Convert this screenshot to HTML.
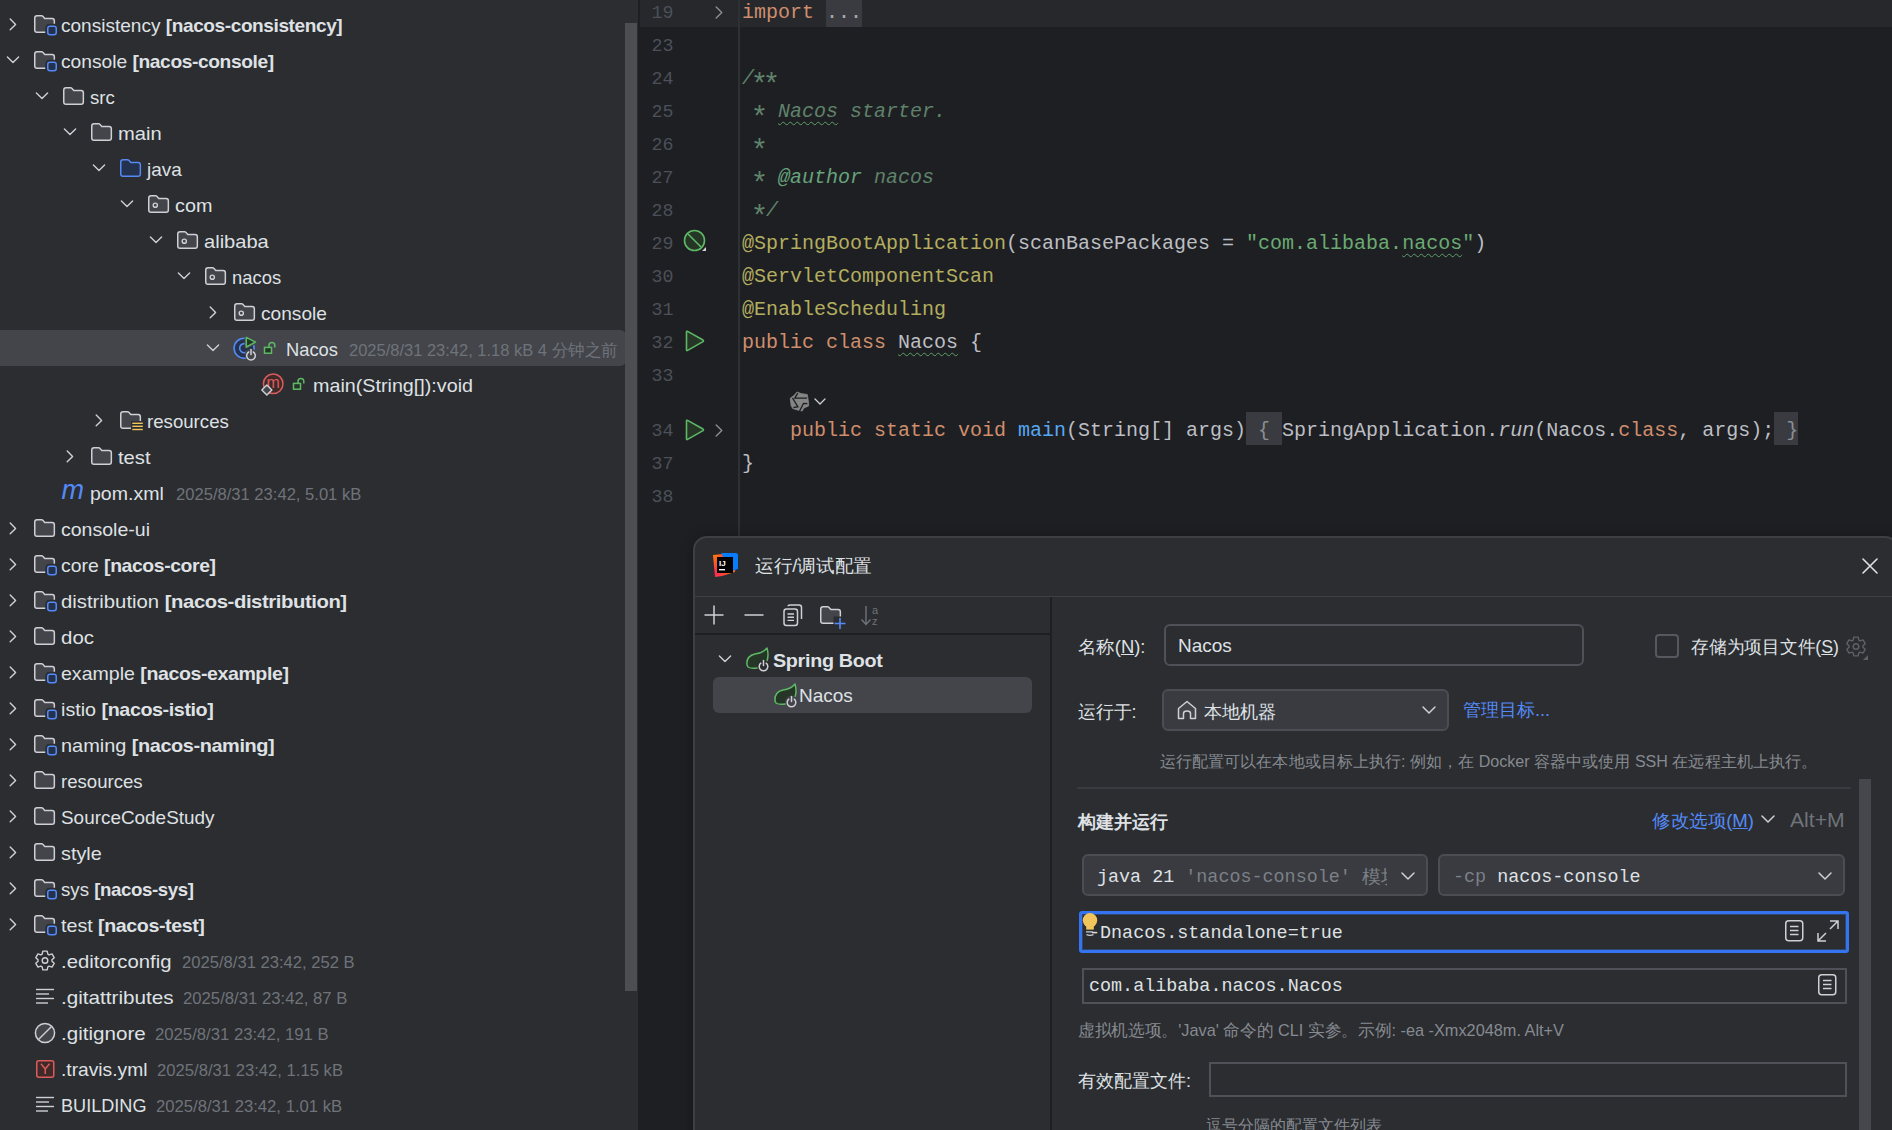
<!DOCTYPE html><html><head><meta charset="utf-8"><style>
html,body{margin:0;padding:0;width:1892px;height:1130px;overflow:hidden;background:#1E1F22;}
.t{position:absolute;white-space:pre;}
.r{position:absolute;}
.i{position:absolute;overflow:visible;}
.ast{display:inline-block;font-style:normal;transform:translate(-0.5px,5.8px) scale(1.45);transform-origin:50% 30%;}
</style></head><body>
<div class="r" style="left:0px;top:0px;width:638px;height:1130px;background:#2B2D30;"></div>
<svg class="i" style="left:8.0px;top:-18px" width="10" height="14" viewBox="0 0 10 14"><polyline points="2.2,1 7.6,6.4 2.2,11.8" fill="none" stroke="#CED0D6" stroke-width="1.4" stroke-linejoin="round" stroke-linecap="round"/></svg>
<svg class="i" style="left:34.0px;top:-21px" width="24" height="22" viewBox="0 0 24 22"><path d="M0.75,3 Q0.75,0.75 3,0.75 H7.6 Q8.3,0.75 8.8,1.25 L10.8,3.4 H18.1 Q20.35,3.4 20.35,5.65 V15 Q20.35,17.25 18.1,17.25 H3 Q0.75,17.25 0.75,15 Z" fill="#43454A" stroke="#CED0D6" stroke-width="1.5" stroke-linejoin="round"/><rect x="13" y="10.5" width="10" height="10" rx="2.6" fill="#2B2D30" stroke="#2B2D30" stroke-width="3.5"/><rect x="13.75" y="11.25" width="8.5" height="8.5" rx="2.2" fill="#25324D" stroke="#548AF7" stroke-width="1.5"/></svg>
<div class="t" id="row0" style="left:61.0px;top:-20.4px;font-size:19px;line-height:19px;color:#DFE1E5;font-family:'Liberation Sans', sans-serif;transform:scaleX(0.7956);transform-origin:0 0;">common <b style="letter-spacing:-0.4px">[nacos-common]</b></div>
<svg class="i" style="left:8.0px;top:18px" width="10" height="14" viewBox="0 0 10 14"><polyline points="2.2,1 7.6,6.4 2.2,11.8" fill="none" stroke="#CED0D6" stroke-width="1.4" stroke-linejoin="round" stroke-linecap="round"/></svg>
<svg class="i" style="left:34.0px;top:15px" width="24" height="22" viewBox="0 0 24 22"><path d="M0.75,3 Q0.75,0.75 3,0.75 H7.6 Q8.3,0.75 8.8,1.25 L10.8,3.4 H18.1 Q20.35,3.4 20.35,5.65 V15 Q20.35,17.25 18.1,17.25 H3 Q0.75,17.25 0.75,15 Z" fill="#43454A" stroke="#CED0D6" stroke-width="1.5" stroke-linejoin="round"/><rect x="13" y="10.5" width="10" height="10" rx="2.6" fill="#2B2D30" stroke="#2B2D30" stroke-width="3.5"/><rect x="13.75" y="11.25" width="8.5" height="8.5" rx="2.2" fill="#25324D" stroke="#548AF7" stroke-width="1.5"/></svg>
<div class="t" id="row1" style="left:61.0px;top:15.6px;font-size:19px;line-height:19px;color:#DFE1E5;font-family:'Liberation Sans', sans-serif;transform:scaleX(1.0022);transform-origin:0 0;">consistency <b style="letter-spacing:-0.4px">[nacos-consistency]</b></div>
<svg class="i" style="left:6.0px;top:55px" width="14" height="10" viewBox="0 0 14 10"><polyline points="1.4,2 7,7.4 12.6,2" fill="none" stroke="#CED0D6" stroke-width="1.4" stroke-linejoin="round" stroke-linecap="round"/></svg>
<svg class="i" style="left:34.0px;top:51px" width="24" height="22" viewBox="0 0 24 22"><path d="M0.75,3 Q0.75,0.75 3,0.75 H7.6 Q8.3,0.75 8.8,1.25 L10.8,3.4 H18.1 Q20.35,3.4 20.35,5.65 V15 Q20.35,17.25 18.1,17.25 H3 Q0.75,17.25 0.75,15 Z" fill="#43454A" stroke="#CED0D6" stroke-width="1.5" stroke-linejoin="round"/><rect x="13" y="10.5" width="10" height="10" rx="2.6" fill="#2B2D30" stroke="#2B2D30" stroke-width="3.5"/><rect x="13.75" y="11.25" width="8.5" height="8.5" rx="2.2" fill="#25324D" stroke="#548AF7" stroke-width="1.5"/></svg>
<div class="t" id="row2" style="left:61.0px;top:51.6px;font-size:19px;line-height:19px;color:#DFE1E5;font-family:'Liberation Sans', sans-serif;transform:scaleX(1.0105);transform-origin:0 0;">console <b style="letter-spacing:-0.4px">[nacos-console]</b></div>
<svg class="i" style="left:34.5px;top:91px" width="14" height="10" viewBox="0 0 14 10"><polyline points="1.4,2 7,7.4 12.6,2" fill="none" stroke="#CED0D6" stroke-width="1.4" stroke-linejoin="round" stroke-linecap="round"/></svg>
<svg class="i" style="left:62.5px;top:87px" width="22" height="18" viewBox="0 0 22 18"><path d="M0.75,3 Q0.75,0.75 3,0.75 H7.6 Q8.3,0.75 8.8,1.25 L10.8,3.4 H18.1 Q20.35,3.4 20.35,5.65 V15 Q20.35,17.25 18.1,17.25 H3 Q0.75,17.25 0.75,15 Z" fill="#43454A" stroke="#CED0D6" stroke-width="1.5" stroke-linejoin="round"/></svg>
<div class="t" id="row3" style="left:89.5px;top:87.6px;font-size:19px;line-height:19px;color:#DFE1E5;font-family:'Liberation Sans', sans-serif;transform:scaleX(0.9791);transform-origin:0 0;">src</div>
<svg class="i" style="left:63.0px;top:127px" width="14" height="10" viewBox="0 0 14 10"><polyline points="1.4,2 7,7.4 12.6,2" fill="none" stroke="#CED0D6" stroke-width="1.4" stroke-linejoin="round" stroke-linecap="round"/></svg>
<svg class="i" style="left:91.0px;top:123px" width="22" height="18" viewBox="0 0 22 18"><path d="M0.75,3 Q0.75,0.75 3,0.75 H7.6 Q8.3,0.75 8.8,1.25 L10.8,3.4 H18.1 Q20.35,3.4 20.35,5.65 V15 Q20.35,17.25 18.1,17.25 H3 Q0.75,17.25 0.75,15 Z" fill="#43454A" stroke="#CED0D6" stroke-width="1.5" stroke-linejoin="round"/></svg>
<div class="t" id="row4" style="left:118.0px;top:123.6px;font-size:19px;line-height:19px;color:#DFE1E5;font-family:'Liberation Sans', sans-serif;transform:scaleX(1.0610);transform-origin:0 0;">main</div>
<svg class="i" style="left:91.5px;top:163px" width="14" height="10" viewBox="0 0 14 10"><polyline points="1.4,2 7,7.4 12.6,2" fill="none" stroke="#CED0D6" stroke-width="1.4" stroke-linejoin="round" stroke-linecap="round"/></svg>
<svg class="i" style="left:119.5px;top:159px" width="22" height="18" viewBox="0 0 22 18"><path d="M0.75,3 Q0.75,0.75 3,0.75 H7.6 Q8.3,0.75 8.8,1.25 L10.8,3.4 H18.1 Q20.35,3.4 20.35,5.65 V15 Q20.35,17.25 18.1,17.25 H3 Q0.75,17.25 0.75,15 Z" fill="#25324D" stroke="#548AF7" stroke-width="1.5" stroke-linejoin="round"/></svg>
<div class="t" id="row5" style="left:146.5px;top:159.6px;font-size:19px;line-height:19px;color:#DFE1E5;font-family:'Liberation Sans', sans-serif;transform:scaleX(0.9983);transform-origin:0 0;">java</div>
<svg class="i" style="left:120.0px;top:199px" width="14" height="10" viewBox="0 0 14 10"><polyline points="1.4,2 7,7.4 12.6,2" fill="none" stroke="#CED0D6" stroke-width="1.4" stroke-linejoin="round" stroke-linecap="round"/></svg>
<svg class="i" style="left:148.0px;top:195px" width="22" height="18" viewBox="0 0 22 18"><path d="M0.75,3 Q0.75,0.75 3,0.75 H7.6 Q8.3,0.75 8.8,1.25 L10.8,3.4 H18.1 Q20.35,3.4 20.35,5.65 V15 Q20.35,17.25 18.1,17.25 H3 Q0.75,17.25 0.75,15 Z" fill="#43454A" stroke="#CED0D6" stroke-width="1.5" stroke-linejoin="round"/><circle cx="7.3" cy="10.2" r="2.1" fill="none" stroke="#CED0D6" stroke-width="1.4"/></svg>
<div class="t" id="row6" style="left:175.0px;top:195.6px;font-size:19px;line-height:19px;color:#DFE1E5;font-family:'Liberation Sans', sans-serif;transform:scaleX(1.0416);transform-origin:0 0;">com</div>
<svg class="i" style="left:148.5px;top:235px" width="14" height="10" viewBox="0 0 14 10"><polyline points="1.4,2 7,7.4 12.6,2" fill="none" stroke="#CED0D6" stroke-width="1.4" stroke-linejoin="round" stroke-linecap="round"/></svg>
<svg class="i" style="left:176.5px;top:231px" width="22" height="18" viewBox="0 0 22 18"><path d="M0.75,3 Q0.75,0.75 3,0.75 H7.6 Q8.3,0.75 8.8,1.25 L10.8,3.4 H18.1 Q20.35,3.4 20.35,5.65 V15 Q20.35,17.25 18.1,17.25 H3 Q0.75,17.25 0.75,15 Z" fill="#43454A" stroke="#CED0D6" stroke-width="1.5" stroke-linejoin="round"/><circle cx="7.3" cy="10.2" r="2.1" fill="none" stroke="#CED0D6" stroke-width="1.4"/></svg>
<div class="t" id="row7" style="left:203.5px;top:231.6px;font-size:19px;line-height:19px;color:#DFE1E5;font-family:'Liberation Sans', sans-serif;transform:scaleX(1.0574);transform-origin:0 0;">alibaba</div>
<svg class="i" style="left:177.0px;top:271px" width="14" height="10" viewBox="0 0 14 10"><polyline points="1.4,2 7,7.4 12.6,2" fill="none" stroke="#CED0D6" stroke-width="1.4" stroke-linejoin="round" stroke-linecap="round"/></svg>
<svg class="i" style="left:205.0px;top:267px" width="22" height="18" viewBox="0 0 22 18"><path d="M0.75,3 Q0.75,0.75 3,0.75 H7.6 Q8.3,0.75 8.8,1.25 L10.8,3.4 H18.1 Q20.35,3.4 20.35,5.65 V15 Q20.35,17.25 18.1,17.25 H3 Q0.75,17.25 0.75,15 Z" fill="#43454A" stroke="#CED0D6" stroke-width="1.5" stroke-linejoin="round"/><circle cx="7.3" cy="10.2" r="2.1" fill="none" stroke="#CED0D6" stroke-width="1.4"/></svg>
<div class="t" id="row8" style="left:232.0px;top:267.6px;font-size:19px;line-height:19px;color:#DFE1E5;font-family:'Liberation Sans', sans-serif;transform:scaleX(0.9684);transform-origin:0 0;">nacos</div>
<svg class="i" style="left:207.5px;top:306px" width="10" height="14" viewBox="0 0 10 14"><polyline points="2.2,1 7.6,6.4 2.2,11.8" fill="none" stroke="#CED0D6" stroke-width="1.4" stroke-linejoin="round" stroke-linecap="round"/></svg>
<svg class="i" style="left:233.5px;top:303px" width="22" height="18" viewBox="0 0 22 18"><path d="M0.75,3 Q0.75,0.75 3,0.75 H7.6 Q8.3,0.75 8.8,1.25 L10.8,3.4 H18.1 Q20.35,3.4 20.35,5.65 V15 Q20.35,17.25 18.1,17.25 H3 Q0.75,17.25 0.75,15 Z" fill="#43454A" stroke="#CED0D6" stroke-width="1.5" stroke-linejoin="round"/><circle cx="7.3" cy="10.2" r="2.1" fill="none" stroke="#CED0D6" stroke-width="1.4"/></svg>
<div class="t" id="row9" style="left:260.5px;top:303.6px;font-size:19px;line-height:19px;color:#DFE1E5;font-family:'Liberation Sans', sans-serif;transform:scaleX(1.0061);transform-origin:0 0;">console</div>
<div class="r" style="left:0px;top:330px;width:626px;height:36px;background:#43454A;border-radius:0 6px 6px 0;"></div>
<svg class="i" style="left:205.5px;top:343px" width="14" height="10" viewBox="0 0 14 10"><polyline points="1.4,2 7,7.4 12.6,2" fill="none" stroke="#CED0D6" stroke-width="1.4" stroke-linejoin="round" stroke-linecap="round"/></svg>
<svg class="i" style="left:232px;top:337px" width="26" height="26" viewBox="0 0 26 26"><circle cx="12.1" cy="11.2" r="10" fill="#25324D" stroke="#548AF7" stroke-width="1.6"/><path d="M15.6,8 A4.6,4.6 0 1 0 15.6,14.4" fill="none" stroke="#548AF7" stroke-width="1.6"/><path d="M14.3,0.3 L14.3,10 L23.5,5.2 Z" fill="#43454A" stroke="#43454A" stroke-width="3.5" stroke-linejoin="round"/><path d="M14.3,0.3 L14.3,10 L23.5,5.2 Z" fill="#253627" stroke="#5FB865" stroke-width="1.5" stroke-linejoin="round"/><circle cx="19" cy="18" r="6.2" fill="#43454A"/><path d="M16.7,15 A4.3,4.3 0 1 0 21.3,15" fill="none" stroke="#CED0D6" stroke-width="1.5" stroke-linecap="round"/><line x1="19" y1="12.5" x2="19" y2="17.5" stroke="#CED0D6" stroke-width="1.5" stroke-linecap="round"/></svg>
<svg class="i" style="left:263px;top:342px" width="14" height="14" viewBox="0 0 14 14"><rect x="1.5" y="5.4" width="7" height="5.8" fill="#253627" stroke="#5FB865" stroke-width="1.5"/><path d="M6,5.4 V3.4 A2.9,2.9 0 0 1 11.8,3.4 V5.5" fill="none" stroke="#5FB865" stroke-width="1.5"/></svg>
<div class="t" id="row10" style="left:286.0px;top:339.6px;font-size:19px;line-height:19px;color:#DFE1E5;font-family:'Liberation Sans', sans-serif;transform:scaleX(0.9655);transform-origin:0 0;">Nacos</div>
<div class="t" id="info10" style="left:349.0px;top:342.1px;font-size:17px;line-height:17px;color:#6F737A;font-family:'Liberation Sans', sans-serif;transform:scaleX(0.9697);transform-origin:0 0;">2025/8/31 23:42, 1.18 kB 4 分钟之前</div>
<svg class="i" style="left:260px;top:374px" width="24" height="24" viewBox="0 0 24 24"><circle cx="13.2" cy="9.8" r="9.8" fill="#402929" stroke="#DB5C5C" stroke-width="1.5"/><text x="13.2" y="14" font-family="Liberation Sans" font-size="16" fill="#DB5C5C" text-anchor="middle">m</text><path d="M6.85,11 L11.85,16 L6.85,21 L1.85,16 Z" fill="#43454A" stroke="#CED0D6" stroke-width="1.5" stroke-linejoin="round"/></svg>
<svg class="i" style="left:292px;top:378px" width="14" height="14" viewBox="0 0 14 14"><rect x="1.5" y="5.4" width="7" height="5.8" fill="#253627" stroke="#5FB865" stroke-width="1.5"/><path d="M6,5.4 V3.4 A2.9,2.9 0 0 1 11.8,3.4 V5.5" fill="none" stroke="#5FB865" stroke-width="1.5"/></svg>
<div class="t" id="row11" style="left:313.0px;top:375.6px;font-size:19px;line-height:19px;color:#DFE1E5;font-family:'Liberation Sans', sans-serif;transform:scaleX(1.0378);transform-origin:0 0;">main(String[]):void</div>
<svg class="i" style="left:93.5px;top:414px" width="10" height="14" viewBox="0 0 10 14"><polyline points="2.2,1 7.6,6.4 2.2,11.8" fill="none" stroke="#CED0D6" stroke-width="1.4" stroke-linejoin="round" stroke-linecap="round"/></svg>
<svg class="i" style="left:119.5px;top:411px" width="24" height="22" viewBox="0 0 24 22"><path d="M0.75,3 Q0.75,0.75 3,0.75 H7.6 Q8.3,0.75 8.8,1.25 L10.8,3.4 H18.1 Q20.35,3.4 20.35,5.65 V15 Q20.35,17.25 18.1,17.25 H3 Q0.75,17.25 0.75,15 Z" fill="#43454A" stroke="#CED0D6" stroke-width="1.5" stroke-linejoin="round"/><rect x="11" y="10" width="12" height="10" fill="#2B2D30"/><line x1="12.3" y1="12.3" x2="22.8" y2="12.3" stroke="#F2C55C" stroke-width="1.4"/><line x1="12.3" y1="15.3" x2="22.8" y2="15.3" stroke="#F2C55C" stroke-width="1.4"/><line x1="12.3" y1="18.5" x2="22.8" y2="18.5" stroke="#F2C55C" stroke-width="1.4"/></svg>
<div class="t" id="row12" style="left:146.5px;top:411.6px;font-size:19px;line-height:19px;color:#DFE1E5;font-family:'Liberation Sans', sans-serif;transform:scaleX(0.9806);transform-origin:0 0;">resources</div>
<svg class="i" style="left:65.0px;top:450px" width="10" height="14" viewBox="0 0 10 14"><polyline points="2.2,1 7.6,6.4 2.2,11.8" fill="none" stroke="#CED0D6" stroke-width="1.4" stroke-linejoin="round" stroke-linecap="round"/></svg>
<svg class="i" style="left:91.0px;top:447px" width="22" height="18" viewBox="0 0 22 18"><path d="M0.75,3 Q0.75,0.75 3,0.75 H7.6 Q8.3,0.75 8.8,1.25 L10.8,3.4 H18.1 Q20.35,3.4 20.35,5.65 V15 Q20.35,17.25 18.1,17.25 H3 Q0.75,17.25 0.75,15 Z" fill="#43454A" stroke="#CED0D6" stroke-width="1.5" stroke-linejoin="round"/></svg>
<div class="t" id="row13" style="left:118.0px;top:447.6px;font-size:19px;line-height:19px;color:#DFE1E5;font-family:'Liberation Sans', sans-serif;transform:scaleX(1.0612);transform-origin:0 0;">test</div>
<div class="t" style="left:61.5px;top:476.6px;font-size:27px;line-height:27px;color:#548AF7;font-family:'Liberation Sans', sans-serif;font-style:italic;letter-spacing:-1px;">m</div>
<div class="t" id="row14" style="left:89.5px;top:483.6px;font-size:19px;line-height:19px;color:#DFE1E5;font-family:'Liberation Sans', sans-serif;transform:scaleX(1.0279);transform-origin:0 0;">pom.xml</div>
<div class="t" id="info14" style="left:175.7px;top:486.1px;font-size:17px;line-height:17px;color:#6F737A;font-family:'Liberation Sans', sans-serif;transform:scaleX(0.9753);transform-origin:0 0;">2025/8/31 23:42, 5.01 kB</div>
<svg class="i" style="left:8.0px;top:522px" width="10" height="14" viewBox="0 0 10 14"><polyline points="2.2,1 7.6,6.4 2.2,11.8" fill="none" stroke="#CED0D6" stroke-width="1.4" stroke-linejoin="round" stroke-linecap="round"/></svg>
<svg class="i" style="left:34.0px;top:519px" width="22" height="18" viewBox="0 0 22 18"><path d="M0.75,3 Q0.75,0.75 3,0.75 H7.6 Q8.3,0.75 8.8,1.25 L10.8,3.4 H18.1 Q20.35,3.4 20.35,5.65 V15 Q20.35,17.25 18.1,17.25 H3 Q0.75,17.25 0.75,15 Z" fill="#43454A" stroke="#CED0D6" stroke-width="1.5" stroke-linejoin="round"/></svg>
<div class="t" id="row15" style="left:61.0px;top:519.6px;font-size:19px;line-height:19px;color:#DFE1E5;font-family:'Liberation Sans', sans-serif;transform:scaleX(1.0276);transform-origin:0 0;">console-ui</div>
<svg class="i" style="left:8.0px;top:558px" width="10" height="14" viewBox="0 0 10 14"><polyline points="2.2,1 7.6,6.4 2.2,11.8" fill="none" stroke="#CED0D6" stroke-width="1.4" stroke-linejoin="round" stroke-linecap="round"/></svg>
<svg class="i" style="left:34.0px;top:555px" width="24" height="22" viewBox="0 0 24 22"><path d="M0.75,3 Q0.75,0.75 3,0.75 H7.6 Q8.3,0.75 8.8,1.25 L10.8,3.4 H18.1 Q20.35,3.4 20.35,5.65 V15 Q20.35,17.25 18.1,17.25 H3 Q0.75,17.25 0.75,15 Z" fill="#43454A" stroke="#CED0D6" stroke-width="1.5" stroke-linejoin="round"/><rect x="13" y="10.5" width="10" height="10" rx="2.6" fill="#2B2D30" stroke="#2B2D30" stroke-width="3.5"/><rect x="13.75" y="11.25" width="8.5" height="8.5" rx="2.2" fill="#25324D" stroke="#548AF7" stroke-width="1.5"/></svg>
<div class="t" id="row16" style="left:61.0px;top:555.6px;font-size:19px;line-height:19px;color:#DFE1E5;font-family:'Liberation Sans', sans-serif;transform:scaleX(1.0206);transform-origin:0 0;">core <b style="letter-spacing:-0.4px">[nacos-core]</b></div>
<svg class="i" style="left:8.0px;top:594px" width="10" height="14" viewBox="0 0 10 14"><polyline points="2.2,1 7.6,6.4 2.2,11.8" fill="none" stroke="#CED0D6" stroke-width="1.4" stroke-linejoin="round" stroke-linecap="round"/></svg>
<svg class="i" style="left:34.0px;top:591px" width="24" height="22" viewBox="0 0 24 22"><path d="M0.75,3 Q0.75,0.75 3,0.75 H7.6 Q8.3,0.75 8.8,1.25 L10.8,3.4 H18.1 Q20.35,3.4 20.35,5.65 V15 Q20.35,17.25 18.1,17.25 H3 Q0.75,17.25 0.75,15 Z" fill="#43454A" stroke="#CED0D6" stroke-width="1.5" stroke-linejoin="round"/><rect x="13" y="10.5" width="10" height="10" rx="2.6" fill="#2B2D30" stroke="#2B2D30" stroke-width="3.5"/><rect x="13.75" y="11.25" width="8.5" height="8.5" rx="2.2" fill="#25324D" stroke="#548AF7" stroke-width="1.5"/></svg>
<div class="t" id="row17" style="left:61.0px;top:591.6px;font-size:19px;line-height:19px;color:#DFE1E5;font-family:'Liberation Sans', sans-serif;transform:scaleX(1.0678);transform-origin:0 0;">distribution <b style="letter-spacing:-0.4px">[nacos-distribution]</b></div>
<svg class="i" style="left:8.0px;top:630px" width="10" height="14" viewBox="0 0 10 14"><polyline points="2.2,1 7.6,6.4 2.2,11.8" fill="none" stroke="#CED0D6" stroke-width="1.4" stroke-linejoin="round" stroke-linecap="round"/></svg>
<svg class="i" style="left:34.0px;top:627px" width="22" height="18" viewBox="0 0 22 18"><path d="M0.75,3 Q0.75,0.75 3,0.75 H7.6 Q8.3,0.75 8.8,1.25 L10.8,3.4 H18.1 Q20.35,3.4 20.35,5.65 V15 Q20.35,17.25 18.1,17.25 H3 Q0.75,17.25 0.75,15 Z" fill="#43454A" stroke="#CED0D6" stroke-width="1.5" stroke-linejoin="round"/></svg>
<div class="t" id="row18" style="left:61.0px;top:627.6px;font-size:19px;line-height:19px;color:#DFE1E5;font-family:'Liberation Sans', sans-serif;transform:scaleX(1.0770);transform-origin:0 0;">doc</div>
<svg class="i" style="left:8.0px;top:666px" width="10" height="14" viewBox="0 0 10 14"><polyline points="2.2,1 7.6,6.4 2.2,11.8" fill="none" stroke="#CED0D6" stroke-width="1.4" stroke-linejoin="round" stroke-linecap="round"/></svg>
<svg class="i" style="left:34.0px;top:663px" width="24" height="22" viewBox="0 0 24 22"><path d="M0.75,3 Q0.75,0.75 3,0.75 H7.6 Q8.3,0.75 8.8,1.25 L10.8,3.4 H18.1 Q20.35,3.4 20.35,5.65 V15 Q20.35,17.25 18.1,17.25 H3 Q0.75,17.25 0.75,15 Z" fill="#43454A" stroke="#CED0D6" stroke-width="1.5" stroke-linejoin="round"/><rect x="13" y="10.5" width="10" height="10" rx="2.6" fill="#2B2D30" stroke="#2B2D30" stroke-width="3.5"/><rect x="13.75" y="11.25" width="8.5" height="8.5" rx="2.2" fill="#25324D" stroke="#548AF7" stroke-width="1.5"/></svg>
<div class="t" id="row19" style="left:61.0px;top:663.6px;font-size:19px;line-height:19px;color:#DFE1E5;font-family:'Liberation Sans', sans-serif;transform:scaleX(1.0291);transform-origin:0 0;">example <b style="letter-spacing:-0.4px">[nacos-example]</b></div>
<svg class="i" style="left:8.0px;top:702px" width="10" height="14" viewBox="0 0 10 14"><polyline points="2.2,1 7.6,6.4 2.2,11.8" fill="none" stroke="#CED0D6" stroke-width="1.4" stroke-linejoin="round" stroke-linecap="round"/></svg>
<svg class="i" style="left:34.0px;top:699px" width="24" height="22" viewBox="0 0 24 22"><path d="M0.75,3 Q0.75,0.75 3,0.75 H7.6 Q8.3,0.75 8.8,1.25 L10.8,3.4 H18.1 Q20.35,3.4 20.35,5.65 V15 Q20.35,17.25 18.1,17.25 H3 Q0.75,17.25 0.75,15 Z" fill="#43454A" stroke="#CED0D6" stroke-width="1.5" stroke-linejoin="round"/><rect x="13" y="10.5" width="10" height="10" rx="2.6" fill="#2B2D30" stroke="#2B2D30" stroke-width="3.5"/><rect x="13.75" y="11.25" width="8.5" height="8.5" rx="2.2" fill="#25324D" stroke="#548AF7" stroke-width="1.5"/></svg>
<div class="t" id="row20" style="left:61.0px;top:699.6px;font-size:19px;line-height:19px;color:#DFE1E5;font-family:'Liberation Sans', sans-serif;transform:scaleX(1.0378);transform-origin:0 0;">istio <b style="letter-spacing:-0.4px">[nacos-istio]</b></div>
<svg class="i" style="left:8.0px;top:738px" width="10" height="14" viewBox="0 0 10 14"><polyline points="2.2,1 7.6,6.4 2.2,11.8" fill="none" stroke="#CED0D6" stroke-width="1.4" stroke-linejoin="round" stroke-linecap="round"/></svg>
<svg class="i" style="left:34.0px;top:735px" width="24" height="22" viewBox="0 0 24 22"><path d="M0.75,3 Q0.75,0.75 3,0.75 H7.6 Q8.3,0.75 8.8,1.25 L10.8,3.4 H18.1 Q20.35,3.4 20.35,5.65 V15 Q20.35,17.25 18.1,17.25 H3 Q0.75,17.25 0.75,15 Z" fill="#43454A" stroke="#CED0D6" stroke-width="1.5" stroke-linejoin="round"/><rect x="13" y="10.5" width="10" height="10" rx="2.6" fill="#2B2D30" stroke="#2B2D30" stroke-width="3.5"/><rect x="13.75" y="11.25" width="8.5" height="8.5" rx="2.2" fill="#25324D" stroke="#548AF7" stroke-width="1.5"/></svg>
<div class="t" id="row21" style="left:61.0px;top:735.6px;font-size:19px;line-height:19px;color:#DFE1E5;font-family:'Liberation Sans', sans-serif;transform:scaleX(1.0478);transform-origin:0 0;">naming <b style="letter-spacing:-0.4px">[nacos-naming]</b></div>
<svg class="i" style="left:8.0px;top:774px" width="10" height="14" viewBox="0 0 10 14"><polyline points="2.2,1 7.6,6.4 2.2,11.8" fill="none" stroke="#CED0D6" stroke-width="1.4" stroke-linejoin="round" stroke-linecap="round"/></svg>
<svg class="i" style="left:34.0px;top:771px" width="22" height="18" viewBox="0 0 22 18"><path d="M0.75,3 Q0.75,0.75 3,0.75 H7.6 Q8.3,0.75 8.8,1.25 L10.8,3.4 H18.1 Q20.35,3.4 20.35,5.65 V15 Q20.35,17.25 18.1,17.25 H3 Q0.75,17.25 0.75,15 Z" fill="#43454A" stroke="#CED0D6" stroke-width="1.5" stroke-linejoin="round"/></svg>
<div class="t" id="row22" style="left:61.0px;top:771.6px;font-size:19px;line-height:19px;color:#DFE1E5;font-family:'Liberation Sans', sans-serif;transform:scaleX(0.9782);transform-origin:0 0;">resources</div>
<svg class="i" style="left:8.0px;top:810px" width="10" height="14" viewBox="0 0 10 14"><polyline points="2.2,1 7.6,6.4 2.2,11.8" fill="none" stroke="#CED0D6" stroke-width="1.4" stroke-linejoin="round" stroke-linecap="round"/></svg>
<svg class="i" style="left:34.0px;top:807px" width="22" height="18" viewBox="0 0 22 18"><path d="M0.75,3 Q0.75,0.75 3,0.75 H7.6 Q8.3,0.75 8.8,1.25 L10.8,3.4 H18.1 Q20.35,3.4 20.35,5.65 V15 Q20.35,17.25 18.1,17.25 H3 Q0.75,17.25 0.75,15 Z" fill="#43454A" stroke="#CED0D6" stroke-width="1.5" stroke-linejoin="round"/></svg>
<div class="t" id="row23" style="left:61.0px;top:807.6px;font-size:19px;line-height:19px;color:#DFE1E5;font-family:'Liberation Sans', sans-serif;transform:scaleX(0.9953);transform-origin:0 0;">SourceCodeStudy</div>
<svg class="i" style="left:8.0px;top:846px" width="10" height="14" viewBox="0 0 10 14"><polyline points="2.2,1 7.6,6.4 2.2,11.8" fill="none" stroke="#CED0D6" stroke-width="1.4" stroke-linejoin="round" stroke-linecap="round"/></svg>
<svg class="i" style="left:34.0px;top:843px" width="22" height="18" viewBox="0 0 22 18"><path d="M0.75,3 Q0.75,0.75 3,0.75 H7.6 Q8.3,0.75 8.8,1.25 L10.8,3.4 H18.1 Q20.35,3.4 20.35,5.65 V15 Q20.35,17.25 18.1,17.25 H3 Q0.75,17.25 0.75,15 Z" fill="#43454A" stroke="#CED0D6" stroke-width="1.5" stroke-linejoin="round"/></svg>
<div class="t" id="row24" style="left:61.0px;top:843.6px;font-size:19px;line-height:19px;color:#DFE1E5;font-family:'Liberation Sans', sans-serif;transform:scaleX(1.0415);transform-origin:0 0;">style</div>
<svg class="i" style="left:8.0px;top:882px" width="10" height="14" viewBox="0 0 10 14"><polyline points="2.2,1 7.6,6.4 2.2,11.8" fill="none" stroke="#CED0D6" stroke-width="1.4" stroke-linejoin="round" stroke-linecap="round"/></svg>
<svg class="i" style="left:34.0px;top:879px" width="24" height="22" viewBox="0 0 24 22"><path d="M0.75,3 Q0.75,0.75 3,0.75 H7.6 Q8.3,0.75 8.8,1.25 L10.8,3.4 H18.1 Q20.35,3.4 20.35,5.65 V15 Q20.35,17.25 18.1,17.25 H3 Q0.75,17.25 0.75,15 Z" fill="#43454A" stroke="#CED0D6" stroke-width="1.5" stroke-linejoin="round"/><rect x="13" y="10.5" width="10" height="10" rx="2.6" fill="#2B2D30" stroke="#2B2D30" stroke-width="3.5"/><rect x="13.75" y="11.25" width="8.5" height="8.5" rx="2.2" fill="#25324D" stroke="#548AF7" stroke-width="1.5"/></svg>
<div class="t" id="row25" style="left:61.0px;top:879.6px;font-size:19px;line-height:19px;color:#DFE1E5;font-family:'Liberation Sans', sans-serif;transform:scaleX(0.9816);transform-origin:0 0;">sys <b style="letter-spacing:-0.4px">[nacos-sys]</b></div>
<svg class="i" style="left:8.0px;top:918px" width="10" height="14" viewBox="0 0 10 14"><polyline points="2.2,1 7.6,6.4 2.2,11.8" fill="none" stroke="#CED0D6" stroke-width="1.4" stroke-linejoin="round" stroke-linecap="round"/></svg>
<svg class="i" style="left:34.0px;top:915px" width="24" height="22" viewBox="0 0 24 22"><path d="M0.75,3 Q0.75,0.75 3,0.75 H7.6 Q8.3,0.75 8.8,1.25 L10.8,3.4 H18.1 Q20.35,3.4 20.35,5.65 V15 Q20.35,17.25 18.1,17.25 H3 Q0.75,17.25 0.75,15 Z" fill="#43454A" stroke="#CED0D6" stroke-width="1.5" stroke-linejoin="round"/><rect x="13" y="10.5" width="10" height="10" rx="2.6" fill="#2B2D30" stroke="#2B2D30" stroke-width="3.5"/><rect x="13.75" y="11.25" width="8.5" height="8.5" rx="2.2" fill="#25324D" stroke="#548AF7" stroke-width="1.5"/></svg>
<div class="t" id="row26" style="left:61.0px;top:915.6px;font-size:19px;line-height:19px;color:#DFE1E5;font-family:'Liberation Sans', sans-serif;transform:scaleX(1.0339);transform-origin:0 0;">test <b style="letter-spacing:-0.4px">[nacos-test]</b></div>
<svg class="i" style="left:34px;top:950px" width="22" height="22" viewBox="0 0 22 22"><path d="M8.15,4.11 L8.84,1.15 L13.16,1.15 L13.85,4.11 L15.11,4.84 L18.02,3.95 L20.18,7.69 L17.96,9.77 L17.96,11.23 L20.18,13.31 L18.02,17.05 L15.11,16.16 L13.85,16.89 L13.16,19.85 L8.84,19.85 L8.15,16.89 L6.89,16.16 L3.98,17.05 L1.82,13.31 L4.04,11.23 L4.04,9.77 L1.82,7.69 L3.98,3.95 L6.89,4.84 Z" fill="none" stroke="#CED0D6" stroke-width="1.4" stroke-linejoin="round"/><circle cx="11" cy="10.5" r="2.8" fill="none" stroke="#CED0D6" stroke-width="1.4"/></svg>
<div class="t" id="row27" style="left:61.0px;top:951.6px;font-size:19px;line-height:19px;color:#DFE1E5;font-family:'Liberation Sans', sans-serif;transform:scaleX(1.0675);transform-origin:0 0;">.editorconfig</div>
<div class="t" id="info27" style="left:181.7px;top:954.1px;font-size:17px;line-height:17px;color:#6F737A;font-family:'Liberation Sans', sans-serif;transform:scaleX(0.9770);transform-origin:0 0;">2025/8/31 23:42, 252 B</div>
<svg class="i" style="left:35px;top:988px" width="20" height="17" viewBox="0 0 20 17"><line x1="1" y1="1.5" x2="19" y2="1.5" stroke="#CED0D6" stroke-width="1.4"/><line x1="1" y1="6" x2="14" y2="6" stroke="#CED0D6" stroke-width="1.4"/><line x1="1" y1="10.5" x2="19" y2="10.5" stroke="#CED0D6" stroke-width="1.4"/><line x1="1" y1="15" x2="13" y2="15" stroke="#CED0D6" stroke-width="1.4"/></svg>
<div class="t" id="row28" style="left:61.0px;top:987.6px;font-size:19px;line-height:19px;color:#DFE1E5;font-family:'Liberation Sans', sans-serif;transform:scaleX(1.0879);transform-origin:0 0;">.gitattributes</div>
<div class="t" id="info28" style="left:183.0px;top:990.1px;font-size:17px;line-height:17px;color:#6F737A;font-family:'Liberation Sans', sans-serif;transform:scaleX(0.9826);transform-origin:0 0;">2025/8/31 23:42, 87 B</div>
<svg class="i" style="left:34px;top:1022px" width="22" height="22" viewBox="0 0 22 22"><circle cx="11" cy="11" r="9.6" fill="#43454A" stroke="#CED0D6" stroke-width="1.5"/><line x1="4.5" y1="17.5" x2="17.5" y2="4.5" stroke="#CED0D6" stroke-width="1.5"/></svg>
<div class="t" id="row29" style="left:61.0px;top:1023.6px;font-size:19px;line-height:19px;color:#DFE1E5;font-family:'Liberation Sans', sans-serif;transform:scaleX(1.0835);transform-origin:0 0;">.gitignore</div>
<div class="t" id="info29" style="left:155.0px;top:1026.1px;font-size:17px;line-height:17px;color:#6F737A;font-family:'Liberation Sans', sans-serif;transform:scaleX(0.9821);transform-origin:0 0;">2025/8/31 23:42, 191 B</div>
<svg class="i" style="left:36px;top:1060px" width="19" height="18" viewBox="0 0 19 18"><rect x="0.75" y="0.75" width="17" height="16.5" rx="2" fill="#402929" stroke="#DB5C5C" stroke-width="1.5"/><path d="M5,3.8 L9.25,9 L13.5,3.8 M9.25,9 V14" fill="none" stroke="#DB5C5C" stroke-width="1.5"/></svg>
<div class="t" id="row30" style="left:61.0px;top:1059.6px;font-size:19px;line-height:19px;color:#DFE1E5;font-family:'Liberation Sans', sans-serif;transform:scaleX(1.0105);transform-origin:0 0;">.travis.yml</div>
<div class="t" id="info30" style="left:157.2px;top:1062.1px;font-size:17px;line-height:17px;color:#6F737A;font-family:'Liberation Sans', sans-serif;transform:scaleX(0.9789);transform-origin:0 0;">2025/8/31 23:42, 1.15 kB</div>
<svg class="i" style="left:35px;top:1096px" width="20" height="17" viewBox="0 0 20 17"><line x1="1" y1="1.5" x2="19" y2="1.5" stroke="#CED0D6" stroke-width="1.4"/><line x1="1" y1="6" x2="14" y2="6" stroke="#CED0D6" stroke-width="1.4"/><line x1="1" y1="10.5" x2="19" y2="10.5" stroke="#CED0D6" stroke-width="1.4"/><line x1="1" y1="15" x2="13" y2="15" stroke="#CED0D6" stroke-width="1.4"/></svg>
<div class="t" id="row31" style="left:61.0px;top:1095.6px;font-size:19px;line-height:19px;color:#DFE1E5;font-family:'Liberation Sans', sans-serif;transform:scaleX(0.9526);transform-origin:0 0;">BUILDING</div>
<div class="t" id="info31" style="left:156.3px;top:1098.1px;font-size:17px;line-height:17px;color:#6F737A;font-family:'Liberation Sans', sans-serif;transform:scaleX(0.9795);transform-origin:0 0;">2025/8/31 23:42, 1.01 kB</div>
<div class="r" style="left:625px;top:23px;width:12px;height:968px;background:#4C4E52;border-radius:0;"></div>
<div class="r" style="left:638px;top:0px;width:1254px;height:1130px;background:#1E1F22;"></div>
<div class="r" style="left:640px;top:0px;width:1252px;height:27px;background:#26282C;"></div>
<div class="r" style="left:738px;top:0px;width:2px;height:1130px;background:#2E3033;"></div>
<div class="t" style="left:651.5px;top:3.5px;font-size:18.3px;line-height:18.3px;color:#4B5059;font-family:'Liberation Mono', monospace;">19</div>
<div class="t" style="left:651.5px;top:36.5px;font-size:18.3px;line-height:18.3px;color:#4B5059;font-family:'Liberation Mono', monospace;">23</div>
<div class="t" style="left:651.5px;top:69.5px;font-size:18.3px;line-height:18.3px;color:#4B5059;font-family:'Liberation Mono', monospace;">24</div>
<div class="t" style="left:651.5px;top:102.5px;font-size:18.3px;line-height:18.3px;color:#4B5059;font-family:'Liberation Mono', monospace;">25</div>
<div class="t" style="left:651.5px;top:135.5px;font-size:18.3px;line-height:18.3px;color:#4B5059;font-family:'Liberation Mono', monospace;">26</div>
<div class="t" style="left:651.5px;top:168.5px;font-size:18.3px;line-height:18.3px;color:#4B5059;font-family:'Liberation Mono', monospace;">27</div>
<div class="t" style="left:651.5px;top:201.5px;font-size:18.3px;line-height:18.3px;color:#4B5059;font-family:'Liberation Mono', monospace;">28</div>
<div class="t" style="left:651.5px;top:234.5px;font-size:18.3px;line-height:18.3px;color:#4B5059;font-family:'Liberation Mono', monospace;">29</div>
<div class="t" style="left:651.5px;top:267.5px;font-size:18.3px;line-height:18.3px;color:#4B5059;font-family:'Liberation Mono', monospace;">30</div>
<div class="t" style="left:651.5px;top:300.5px;font-size:18.3px;line-height:18.3px;color:#4B5059;font-family:'Liberation Mono', monospace;">31</div>
<div class="t" style="left:651.5px;top:333.5px;font-size:18.3px;line-height:18.3px;color:#4B5059;font-family:'Liberation Mono', monospace;">32</div>
<div class="t" style="left:651.5px;top:366.5px;font-size:18.3px;line-height:18.3px;color:#4B5059;font-family:'Liberation Mono', monospace;">33</div>
<div class="t" style="left:651.5px;top:422.2px;font-size:18.3px;line-height:18.3px;color:#4B5059;font-family:'Liberation Mono', monospace;">34</div>
<div class="t" style="left:651.5px;top:455.2px;font-size:18.3px;line-height:18.3px;color:#4B5059;font-family:'Liberation Mono', monospace;">37</div>
<div class="t" style="left:651.5px;top:488.2px;font-size:18.3px;line-height:18.3px;color:#4B5059;font-family:'Liberation Mono', monospace;">38</div>
<div class="t" style="left:742.0px;top:2.7px;font-size:20px;line-height:20px;color:#BCBEC4;font-family:'Liberation Mono', monospace;"><span style="color:#CF8E6D">import</span><span style=""> </span></div>
<div class="r" style="left:826px;top:0px;width:36px;height:27px;background:#393B40;"></div>
<div class="t" style="left:826.0px;top:2.7px;font-size:20px;line-height:20px;color:#BCBEC4;font-family:'Liberation Mono', monospace;"><span style="color:#A9ABB0">...</span></div>
<div class="t" style="left:742.0px;top:68.7px;font-size:20px;line-height:20px;color:#BCBEC4;font-family:'Liberation Mono', monospace;"><span style="color:#5F826B;font-style:italic">/<span class="ast">*</span><span class="ast">*</span></span></div>
<div class="t" style="left:742.0px;top:101.7px;font-size:20px;line-height:20px;color:#BCBEC4;font-family:'Liberation Mono', monospace;"><span style="color:#5F826B;font-style:italic"> <span class="ast">*</span> </span><span style="color:#5F826B;font-style:italic;text-decoration:underline wavy #5F9E6A;text-decoration-thickness:1px;text-underline-offset:4px;">Nacos</span><span style="color:#5F826B;font-style:italic"> starter.</span></div>
<div class="t" style="left:742.0px;top:134.7px;font-size:20px;line-height:20px;color:#BCBEC4;font-family:'Liberation Mono', monospace;"><span style="color:#5F826B;font-style:italic"> <span class="ast">*</span></span></div>
<div class="t" style="left:742.0px;top:167.7px;font-size:20px;line-height:20px;color:#BCBEC4;font-family:'Liberation Mono', monospace;"><span style="color:#5F826B;font-style:italic"> <span class="ast">*</span> </span><span style="color:#67A37C;font-style:italic">@author</span><span style="color:#5F826B;font-style:italic"> nacos</span></div>
<div class="t" style="left:742.0px;top:200.7px;font-size:20px;line-height:20px;color:#BCBEC4;font-family:'Liberation Mono', monospace;"><span style="color:#5F826B;font-style:italic"> <span class="ast">*</span>/</span></div>
<div class="t" style="left:742.0px;top:233.7px;font-size:20px;line-height:20px;color:#BCBEC4;font-family:'Liberation Mono', monospace;"><span style="color:#B3AE60">@SpringBootApplication</span><span style="">(scanBasePackages = </span><span style="color:#6AAB73">&quot;com.alibaba.</span><span style="color:#6AAB73;text-decoration:underline wavy #5F9E6A;text-decoration-thickness:1px;text-underline-offset:4px;">nacos</span><span style="color:#6AAB73">&quot;</span><span style="">)</span></div>
<div class="t" style="left:742.0px;top:266.7px;font-size:20px;line-height:20px;color:#BCBEC4;font-family:'Liberation Mono', monospace;"><span style="color:#B3AE60">@ServletComponentScan</span></div>
<div class="t" style="left:742.0px;top:299.7px;font-size:20px;line-height:20px;color:#BCBEC4;font-family:'Liberation Mono', monospace;"><span style="color:#B3AE60">@EnableScheduling</span></div>
<div class="t" style="left:742.0px;top:332.7px;font-size:20px;line-height:20px;color:#BCBEC4;font-family:'Liberation Mono', monospace;"><span style="color:#CF8E6D">public class </span><span style="text-decoration:underline wavy #5F9E6A;text-decoration-thickness:1px;text-underline-offset:4px;">Nacos</span><span style=""> {</span></div>
<div class="r" style="left:1246.0px;top:412px;width:36px;height:33px;background:#393B40;"></div>
<div class="r" style="left:1774.0px;top:412px;width:24px;height:33px;background:#393B40;"></div>
<div class="t" style="left:790.0px;top:421.4px;font-size:20px;line-height:20px;color:#BCBEC4;font-family:'Liberation Mono', monospace;"><span style="color:#CF8E6D">public static void </span><span style="color:#56A8F5">main</span><span style="">(String[] args)</span><span style="color:#8C8E94"> { </span><span style="">SpringApplication.</span><span style="font-style:italic">run</span><span style="">(Nacos.</span><span style="color:#CF8E6D">class</span><span style="">, args);</span><span style="color:#8C8E94"> }</span></div>
<div class="t" style="left:742.0px;top:454.4px;font-size:20px;line-height:20px;color:#BCBEC4;font-family:'Liberation Mono', monospace;"><span style="">}</span></div>
<svg class="i" style="left:714px;top:6px" width="10" height="14" viewBox="0 0 10 14"><polyline points="2.2,1 7.8,6.5 2.2,12" fill="none" stroke="#8C8E94" stroke-width="1.4" stroke-linejoin="round" stroke-linecap="round"/></svg>
<svg class="i" style="left:714px;top:424px" width="10" height="14" viewBox="0 0 10 14"><polyline points="2.2,1 7.8,6.5 2.2,12" fill="none" stroke="#8C8E94" stroke-width="1.4" stroke-linejoin="round" stroke-linecap="round"/></svg>
<svg class="i" style="left:683px;top:229px" width="24" height="24" viewBox="0 0 24 24"><ellipse cx="11.5" cy="11.5" rx="10" ry="10" fill="#253627" stroke="#5FB865" stroke-width="1.6"/><line x1="5" y1="5" x2="18" y2="18" stroke="#5FB865" stroke-width="1.6"/><path d="M23,18 L23,22 L19,22 Z" fill="#D0D2D6"/></svg>
<svg class="i" style="left:684.5px;top:330px" width="20" height="22" viewBox="0 0 20 22"><path d="M1.5,2 Q1.5,0.8 2.6,1.4 L18,10 Q19,10.8 18,11.6 L2.6,20.4 Q1.5,21 1.5,19.8 Z" fill="#253627" stroke="#5FB865" stroke-width="1.6" stroke-linejoin="round"/></svg>
<svg class="i" style="left:684.5px;top:419px" width="20" height="22" viewBox="0 0 20 22"><path d="M1.5,2 Q1.5,0.8 2.6,1.4 L18,10 Q19,10.8 18,11.6 L2.6,20.4 Q1.5,21 1.5,19.8 Z" fill="#253627" stroke="#5FB865" stroke-width="1.6" stroke-linejoin="round"/></svg>
<svg class="i" style="left:789px;top:391px" width="22" height="22" viewBox="0 0 22 22"><polygon points="8,1 12,2.6 18.3,3.5 19.6,11.8 19.6,15 15,16.9 13.2,20 10,19.4 3.7,17.5 2.1,14.6 1.2,7.3 5,4.5" fill="#858585" stroke="#858585" stroke-width="0.8" stroke-linejoin="round"/><path d="M8.8,2.2 L5.8,7.2 L18,7.2 M3.5,7 L8.9,15.8 L4.5,16.5 M18.4,12.6 L14.5,12.4 L10.5,20.2" fill="none" stroke="#1E1F22" stroke-width="1.3"/></svg>
<svg class="i" style="left:813px;top:397px" width="14" height="10" viewBox="0 0 14 10"><polyline points="2,2 7,7 12,2" fill="none" stroke="#CED0D6" stroke-width="1.3" stroke-linejoin="round" stroke-linecap="round"/></svg>
<div class="r" style="left:693px;top:536px;width:1206px;height:700px;background:transparent;box-shadow:0 0 12px 2px rgba(0,0,0,0.18);border-radius:14px;"></div>
<div class="r" style="left:693px;top:536px;width:1206px;height:700px;background:#2B2D30;box-sizing:border-box;border:2px solid #3D3F43;border-radius:14px;"></div>
<div class="r" style="left:695px;top:596px;width:1197px;height:1px;background:#3E4044;"></div>
<svg class="i" style="left:712px;top:552px" width="26" height="26" viewBox="0 0 26 26"><defs><linearGradient id="lg1" x1="0" y1="0" x2="1" y2="1"><stop offset="0" stop-color="#FF8100"/><stop offset="0.5" stop-color="#FE2857"/><stop offset="1" stop-color="#FF8100"/></linearGradient></defs><path d="M1,3 L11,2 L13,9 L24,7 L23,20 L10,24 L3,25 Z" fill="url(#lg1)"/><path d="M9,1 L24,1 Q26,1 26,3 L26,17 L20,19 Z" fill="#087CFA"/><rect x="5" y="5" width="16" height="16" fill="#000"/><rect x="7" y="17" width="6" height="1.4" fill="#fff"/><text x="7" y="13.5" font-family="Liberation Sans" font-weight="bold" font-size="8" fill="#fff">IJ</text></svg>
<div class="t" id="ttl" style="left:755.0px;top:557.3px;font-size:18px;line-height:18px;color:#DFE1E5;font-family:'Liberation Sans', sans-serif;transform:scaleX(1.0353);transform-origin:0 0;">运行/调试配置</div>
<svg class="i" style="left:1860px;top:556px" width="20" height="20" viewBox="0 0 20 20"><path d="M3,3 L17,17 M17,3 L3,17" stroke="#DFE1E5" stroke-width="1.6" stroke-linecap="round"/></svg>
<svg class="i" style="left:703px;top:604px" width="22" height="22" viewBox="0 0 22 22"><path d="M11,1.5 V20.5 M1.5,11 H20.5" stroke="#CED0D6" stroke-width="1.5"/></svg>
<svg class="i" style="left:743px;top:604px" width="22" height="22" viewBox="0 0 22 22"><path d="M1.5,11 H20.5" stroke="#CED0D6" stroke-width="1.5"/></svg>
<svg class="i" style="left:783px;top:604px" width="20" height="23" viewBox="0 0 20 23"><rect x="1" y="5" width="13.5" height="16.5" rx="2.5" fill="none" stroke="#CED0D6" stroke-width="1.5"/><path d="M5,2.2 Q5,1 7,1 H16 Q18.5,1 18.5,3.5 V15" fill="none" stroke="#CED0D6" stroke-width="1.5"/><path d="M4.5,10 H11 M4.5,13.2 H11 M4.5,16.4 H11" stroke="#CED0D6" stroke-width="1.4"/></svg>
<svg class="i" style="left:820px;top:606px" width="26" height="24" viewBox="0 0 26 24"><path d="M0.75,3 Q0.75,0.75 3,0.75 H7.6 Q8.3,0.75 8.8,1.25 L10.8,3.4 H18.1 Q20.35,3.4 20.35,5.65 V15 Q20.35,17.25 18.1,17.25 H3 Q0.75,17.25 0.75,15 Z" fill="#43454A" stroke="#CED0D6" stroke-width="1.5"/><rect x="13.5" y="10.5" width="12.5" height="13.5" fill="#2B2D30"/><path d="M20,12 V23 M14.5,17.5 H25.5" stroke="#548AF7" stroke-width="1.6"/></svg>
<svg class="i" style="left:860px;top:604px" width="24" height="24" viewBox="0 0 24 24"><path d="M6,2 V20 M1.5,15.5 L6,20.5 L10.5,15.5" fill="none" stroke="#6F737A" stroke-width="1.4"/><text x="12" y="10" font-family="Liberation Sans" font-size="11" fill="#6F737A">a</text><text x="12" y="21" font-family="Liberation Sans" font-size="11" fill="#6F737A">z</text></svg>
<div class="r" style="left:695px;top:633px;width:355px;height:2px;background:#1E1F22;"></div>
<div class="r" style="left:1050px;top:597px;width:2px;height:540px;background:#1E1F22;"></div>
<svg class="i" style="left:718px;top:654px" width="14" height="10" viewBox="0 0 14 10"><polyline points="1.4,2 7,7.4 12.6,2" fill="none" stroke="#CED0D6" stroke-width="1.4" stroke-linejoin="round" stroke-linecap="round"/></svg>
<svg class="i" style="left:745px;top:647px" width="26" height="26" viewBox="0 0 26 26"><path d="M2,18 Q1,9 10,7 Q18,6 22,1 Q24,8 22,14 Q20,20 12,21 Q6,22 3,20 Z" fill="#253627" stroke="#5FB865" stroke-width="1.5" stroke-linejoin="round"/><circle cx="18.5" cy="19" r="6.3" fill="#2B2D30"/><path d="M15.8,16.2 A4.3,4.3 0 1 0 21.2,16.2" fill="none" stroke="#CED0D6" stroke-width="1.5" stroke-linecap="round"/><line x1="18.5" y1="13.5" x2="18.5" y2="18.5" stroke="#CED0D6" stroke-width="1.5" stroke-linecap="round"/></svg>
<div class="t" id="sb" style="left:773.0px;top:650.9px;font-size:19px;line-height:19px;color:#DFE1E5;font-family:'Liberation Sans', sans-serif;font-weight:bold;letter-spacing:-0.3px;transform:scaleX(1.0388);transform-origin:0 0;">Spring Boot</div>
<div class="r" style="left:713px;top:677px;width:319px;height:36px;background:#43454A;border-radius:6px;"></div>
<svg class="i" style="left:773px;top:683px" width="26" height="26" viewBox="0 0 26 26"><path d="M2,18 Q1,9 10,7 Q18,6 22,1 Q24,8 22,14 Q20,20 12,21 Q6,22 3,20 Z" fill="#253627" stroke="#5FB865" stroke-width="1.5" stroke-linejoin="round"/><circle cx="18.5" cy="19" r="6.3" fill="#43454A"/><path d="M15.8,16.2 A4.3,4.3 0 1 0 21.2,16.2" fill="none" stroke="#CED0D6" stroke-width="1.5" stroke-linecap="round"/><line x1="18.5" y1="13.5" x2="18.5" y2="18.5" stroke="#CED0D6" stroke-width="1.5" stroke-linecap="round"/></svg>
<div class="t" style="left:799.0px;top:685.9px;font-size:19px;line-height:19px;color:#DFE1E5;font-family:'Liberation Sans', sans-serif;">Nacos</div>
<div class="t" id="lblname" style="left:1078.0px;top:637.8px;font-size:18px;line-height:18px;color:#DFE1E5;font-family:'Liberation Sans', sans-serif;transform:scaleX(1.0212);transform-origin:0 0;">名称(<u>N</u>):</div>
<div class="r" style="left:1164px;top:624px;width:420px;height:42px;background:#2B2D30;box-sizing:border-box;border:2px solid #4E5157;border-radius:6px;"></div>
<div class="t" style="left:1178.0px;top:636.4px;font-size:19px;line-height:19px;color:#DFE1E5;font-family:'Liberation Sans', sans-serif;">Nacos</div>
<div class="r" style="left:1655px;top:634px;width:24px;height:24px;background:transparent;box-sizing:border-box;border:2px solid #55585E;border-radius:4px;"></div>
<div class="t" id="lblstore" style="left:1691.0px;top:637.8px;font-size:18px;line-height:18px;color:#DFE1E5;font-family:'Liberation Sans', sans-serif;transform:scaleX(0.9866);transform-origin:0 0;">存储为项目文件(<u>S</u>)</div>
<svg class="i" style="left:1845px;top:635.5px" width="24" height="25" viewBox="0 0 24 25"><path d="M8.15,4.11 L8.84,1.15 L13.16,1.15 L13.85,4.11 L15.11,4.84 L18.02,3.95 L20.18,7.69 L17.96,9.77 L17.96,11.23 L20.18,13.31 L18.02,17.05 L15.11,16.16 L13.85,16.89 L13.16,19.85 L8.84,19.85 L8.15,16.89 L6.89,16.16 L3.98,17.05 L1.82,13.31 L4.04,11.23 L4.04,9.77 L1.82,7.69 L3.98,3.95 L6.89,4.84 Z" fill="none" stroke="#5E6166" stroke-width="1.4" stroke-linejoin="round"/><circle cx="11" cy="10.5" r="2.8" fill="none" stroke="#5E6166" stroke-width="1.4"/><path d="M23,19 V24 H18 Z" fill="#5E6166"/></svg>
<div class="t" id="lblrun" style="left:1078.0px;top:702.8px;font-size:18px;line-height:18px;color:#DFE1E5;font-family:'Liberation Sans', sans-serif;transform:scaleX(0.9913);transform-origin:0 0;">运行于:</div>
<div class="r" style="left:1162px;top:689px;width:287px;height:42px;background:#393B40;box-sizing:border-box;border:2px solid #4A4D52;border-radius:6px;"></div>
<svg class="i" style="left:1177px;top:700px" width="20" height="20" viewBox="0 0 20 20"><path d="M1.5,8.5 L10,1.5 L18.5,8.5 V18.5 H13.5 V13.5 Q13.5,11 10,11 Q6.5,11 6.5,13.5 V18.5 H1.5 Z" fill="#43454A" stroke="#CED0D6" stroke-width="1.5" stroke-linejoin="round"/></svg>
<div class="t" id="lbllocal" style="left:1204.0px;top:702.8px;font-size:18px;line-height:18px;color:#DFE1E5;font-family:'Liberation Sans', sans-serif;transform:scaleX(1.0083);transform-origin:0 0;">本地机器</div>
<svg class="i" style="left:1422px;top:705px" width="14" height="10" viewBox="0 0 14 10"><polyline points="1,2 7,8 13,2" fill="none" stroke="#CED0D6" stroke-width="1.5" stroke-linejoin="round" stroke-linecap="round"/></svg>
<div class="t" id="lblmanage" style="left:1463.0px;top:700.8px;font-size:18px;line-height:18px;color:#548AF7;font-family:'Liberation Sans', sans-serif;transform:scaleX(0.9998);transform-origin:0 0;">管理目标...</div>
<div class="t" id="info1" style="left:1160.0px;top:753.5px;font-size:16px;line-height:16px;color:#868A91;font-family:'Liberation Sans', sans-serif;transform:scaleX(1.0042);transform-origin:0 0;">运行配置可以在本地或目标上执行: 例如，在 Docker 容器中或使用 SSH 在远程主机上执行。</div>
<div class="r" style="left:1077px;top:787px;width:774px;height:2px;background:#393B40;"></div>
<div class="t" id="lblbuild" style="left:1078.0px;top:812.8px;font-size:18px;line-height:18px;color:#DFE1E5;font-family:'Liberation Sans', sans-serif;font-weight:bold;transform:scaleX(1.0000);transform-origin:0 0;">构建并运行</div>
<div class="t" id="lblmod" style="left:1652.0px;top:811.8px;font-size:18px;line-height:18px;color:#548AF7;font-family:'Liberation Sans', sans-serif;transform:scaleX(1.0303);transform-origin:0 0;">修改选项(<u>M</u>)</div>
<svg class="i" style="left:1761px;top:814px" width="14" height="10" viewBox="0 0 14 10"><polyline points="1,2 7,8 13,2" fill="none" stroke="#CED0D6" stroke-width="1.5" stroke-linejoin="round" stroke-linecap="round"/></svg>
<div class="t" id="altm" style="left:1790.0px;top:810.5px;font-size:19.5px;line-height:19.5px;color:#6F737A;font-family:'Liberation Sans', sans-serif;transform:scaleX(1.0855);transform-origin:0 0;">Alt+M</div>
<div class="r" style="left:1082px;top:854px;width:346px;height:42px;background:#393B40;box-sizing:border-box;border:2px solid #4A4D52;border-radius:6px;"></div>
<div class="t" style="left:1097.0px;top:869.4px;font-size:18.4px;line-height:18.4px;color:#DFE1E5;font-family:'Liberation Mono', monospace;">java 21 <span style="color:#7C8087">'nacos-console'</span></div>
<div class="t" style="left:1362.0px;top:867.8px;font-size:18.5px;line-height:18.5px;color:#7C8087;font-family:'Liberation Sans', sans-serif;width:25px;overflow:hidden;">模块</div>
<svg class="i" style="left:1401px;top:871px" width="14" height="10" viewBox="0 0 14 10"><polyline points="1,2 7,8 13,2" fill="none" stroke="#CED0D6" stroke-width="1.5" stroke-linejoin="round" stroke-linecap="round"/></svg>
<div class="r" style="left:1438px;top:854px;width:407px;height:42px;background:#393B40;box-sizing:border-box;border:2px solid #4A4D52;border-radius:6px;"></div>
<div class="t" style="left:1453.0px;top:869.4px;font-size:18.4px;line-height:18.4px;color:#DFE1E5;font-family:'Liberation Mono', monospace;"><span style="color:#7C8087">-cp</span> nacos-console</div>
<svg class="i" style="left:1818px;top:871px" width="14" height="10" viewBox="0 0 14 10"><polyline points="1,2 7,8 13,2" fill="none" stroke="#CED0D6" stroke-width="1.5" stroke-linejoin="round" stroke-linecap="round"/></svg>
<div class="r" style="left:1079px;top:911px;width:770px;height:42px;background:#2B2D30;box-sizing:border-box;border:3px solid #3574F0;border-radius:3px;"></div>
<div class="r" style="left:1082px;top:914px;width:764px;height:36px;background:transparent;box-sizing:border-box;border:1px solid #2C4670;"></div>
<div class="t" style="left:1089.0px;top:925.4px;font-size:18.4px;line-height:18.4px;color:#DFE1E5;font-family:'Liberation Mono', monospace;">-Dnacos.standalone=true</div>
<svg class="i" style="left:1082px;top:912px" width="16" height="26" viewBox="0 0 16 26"><circle cx="8" cy="8.3" r="7.2" fill="#F2C55C"/><rect x="4.2" y="13" width="7.6" height="4.6" fill="#F2C55C"/><path d="M4,19.8 H11 M4.5,22.6 Q8,24 11.5,22.6" fill="none" stroke="#CED0D6" stroke-width="1.3"/></svg>
<svg class="i" style="left:1785px;top:920px" width="19" height="22" viewBox="0 0 19 22"><rect x="0.75" y="0.75" width="17" height="20" rx="3" fill="none" stroke="#CED0D6" stroke-width="1.5"/><path d="M5,6.5 H13.5 M5,10.5 H13.5 M5,14.5 H13.5" stroke="#CED0D6" stroke-width="1.5"/></svg>
<svg class="i" style="left:1816px;top:919px" width="24" height="24" viewBox="0 0 24 24"><path d="M14,2 H22 V10 M22,2 L14,10 M2,14 V22 H10 M2,22 L10,14" fill="none" stroke="#CED0D6" stroke-width="1.5"/></svg>
<div class="r" style="left:1082px;top:968px;width:765px;height:36px;background:#2B2D30;box-sizing:border-box;border:2px solid #4E5157;"></div>
<div class="t" style="left:1089.0px;top:978.4px;font-size:18.4px;line-height:18.4px;color:#DFE1E5;font-family:'Liberation Mono', monospace;">com.alibaba.nacos.Nacos</div>
<svg class="i" style="left:1818px;top:974px" width="19" height="22" viewBox="0 0 19 22"><rect x="0.75" y="0.75" width="17" height="20" rx="3" fill="none" stroke="#CED0D6" stroke-width="1.5"/><path d="M5,6.5 H13.5 M5,10.5 H13.5 M5,14.5 H13.5" stroke="#CED0D6" stroke-width="1.5"/></svg>
<div class="t" id="info2" style="left:1078.0px;top:1022.9px;font-size:16.6px;line-height:16.6px;color:#868A91;font-family:'Liberation Sans', sans-serif;transform:scaleX(0.9823);transform-origin:0 0;">虚拟机选项。&#x27;Java&#x27; 命令的 CLI 实参。示例: -ea -Xmx2048m. Alt+V</div>
<div class="t" id="lblprof" style="left:1078.0px;top:1071.8px;font-size:18px;line-height:18px;color:#DFE1E5;font-family:'Liberation Sans', sans-serif;transform:scaleX(0.9999);transform-origin:0 0;">有效配置文件:</div>
<div class="r" style="left:1209px;top:1062px;width:638px;height:35px;background:#2B2D30;box-sizing:border-box;border:2px solid #4E5157;"></div>
<div class="t" style="left:1206.0px;top:1117.5px;font-size:16px;line-height:16px;color:#868A91;font-family:'Liberation Sans', sans-serif;">逗号分隔的配置文件列表</div>
<div class="r" style="left:1859px;top:779px;width:12px;height:360px;background:#45474C;"></div>
</body></html>
